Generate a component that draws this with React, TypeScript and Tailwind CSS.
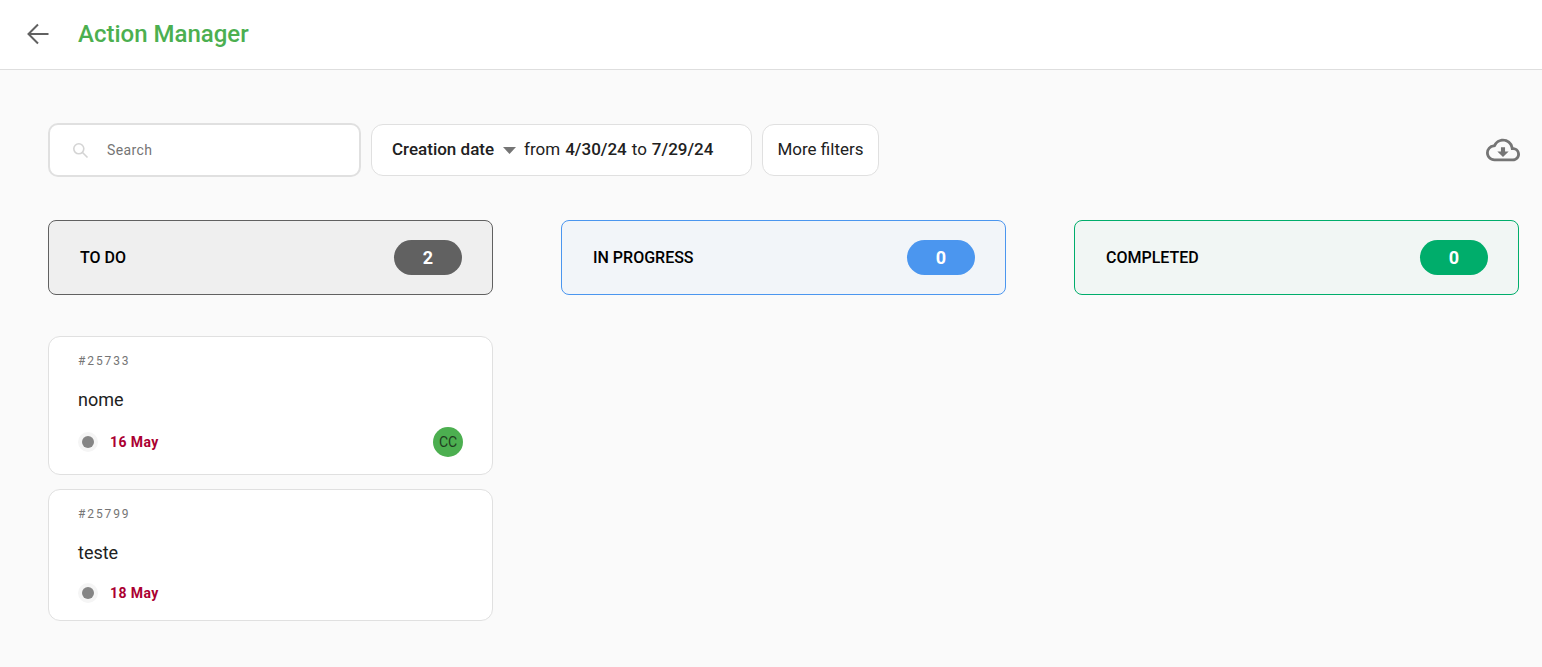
import { MdOutlineCloudDownload } from 'react-icons/md';

const columns = [
  {
    name: 'TO DO',
    count: 2,
    box: 'border-[#616161] bg-[#efefef]',
    pill: 'bg-[#616161]',
  },
  {
    name: 'IN PROGRESS',
    count: 0,
    box: 'border-[#4b96ef] bg-[#f2f5f9]',
    pill: 'bg-[#4b96ef]',
  },
  {
    name: 'COMPLETED',
    count: 0,
    box: 'border-[#00ad6b] bg-[#f1f6f4]',
    pill: 'bg-[#00ad6b]',
  },
];

const Card = ({ id, title, date, initials }: { id: string; title: string; date: string; initials?: string }) => {
  return (
    <div className={`rounded-xl border border-[#e0e0e0] bg-white pl-[29px] pr-[29px] ${initials ? 'h-[139px] pt-[15px]' : 'h-[132px] pt-[15px]'}`}>
      <div className="text-[12px] leading-[18px] tracking-[1.9px] text-[#757575]">{id}</div>
      <div className="mt-[18px] text-[18px] leading-[24px] text-[#212121]">{title}</div>
      <div className={`flex items-center justify-between ${initials ? 'mt-[15px]' : 'mt-[16px]'}`}>
        <div className={`flex items-center gap-[12px] ${initials ? 'h-[30px]' : 'h-[24px]'}`}>
          <div className="flex size-[20px] items-center justify-center rounded-full bg-[#f5f5f5]">
            <div className="size-[12px] rounded-full bg-[#858585]"></div>
          </div>
          <span className="text-[14px] font-bold tracking-[0.4px] text-[#ab0032]">{date}</span>
        </div>
        {initials && (
          <div className="mr-0 flex size-[30px] items-center justify-center rounded-full bg-[#4caf50] text-[14px] text-[#1f3d20]">
            {initials}
          </div>
        )}
      </div>
    </div>
  );
};

const App = () => {
  return (
    <div className="flex h-[667px] flex-col overflow-hidden bg-[#fafafa] font-['Roboto',sans-serif]">
      <header className="flex h-[70px] shrink-0 items-center border-b border-[#dedede] bg-white pl-[27px]">
        <svg width="22" height="22" viewBox="0 0 22 22" fill="none" stroke="#616161" strokeWidth="2" className="-mt-[1px]">
          <path d="M21.5 11H2M11 1.5 1.5 11l9.5 9.5" />
        </svg>
        <div className="ml-[29px] text-[24px] font-medium leading-[32px] -mt-[1px] text-[#4caf50]">Action Manager</div>
      </header>

      <main className="flex-1 pl-[48px] pr-[23px]">
        <div className="mt-[53px] flex h-[54px] items-center">
          <div className="flex h-[54px] w-[313px] items-center rounded-[10px] border-2 border-[#e0e0e0] bg-white pl-[22px]">
            <svg width="17" height="17" viewBox="0 0 17 17" fill="none" stroke="#d4d4d4" strokeWidth="1.6">
              <circle cx="6.8" cy="6.8" r="5" />
              <path d="m10.5 10.5 5 5" />
            </svg>
            <span className="ml-[18px] text-[14px] tracking-[0.4px] text-[#757575]">Search</span>
          </div>
          <div className="ml-[10px] flex h-[52px] w-[381px] items-center rounded-xl border border-[#e0e0e0] bg-white pl-[20px] text-[17px] text-[#212121]">
            <span className="font-medium">Creation date</span>
            <svg width="13" height="7" viewBox="0 0 13 7" className="ml-[9px]">
              <path d="M0 0h13L6.5 7z" fill="#757575" />
            </svg>
            <span className="ml-[8px]">from</span>
            <span className="ml-[5px] font-medium">4/30/24</span>
            <span className="ml-[5px]">to</span>
            <span className="ml-[5px] font-medium">7/29/24</span>
          </div>
          <div className="ml-[10px] flex h-[52px] w-[117px] items-center justify-center rounded-xl border border-[#e0e0e0] bg-white text-[17px] text-[#212121]">
            More filters
          </div>
          <div className="ml-auto mr-[-1px] flex items-center text-[#757575]">
            <MdOutlineCloudDownload size={34} />
          </div>
        </div>

        <div className="mt-[43px] grid grid-cols-[445px_445px_445px] gap-x-[68px]">
          {columns.map((column, index) => {
            return (
              <div
                className={`flex h-[75px] items-center justify-between rounded-lg border pl-[31px] pr-[30px] ${column.box}`}
                key={index}
              >
                <span className="text-[16px] font-medium text-black">{column.name}</span>
                <span className={`flex h-[35px] w-[68px] items-center justify-center rounded-full text-[18px] font-bold text-white ${column.pill}`}>
                  {column.count}
                </span>
              </div>
            );
          })}
        </div>

        <div className="mt-[41px] flex w-[445px] flex-col gap-[14px]">
          <Card id="#25733" title="nome" date="16 May" initials="CC" />
          <Card id="#25799" title="teste" date="18 May" />
        </div>
      </main>
    </div>
  );
};

export default App;
